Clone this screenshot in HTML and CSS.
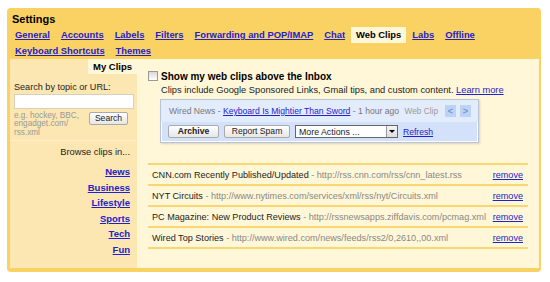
FILE: index.html
```html
<!DOCTYPE html>
<html lang="en">
<head>
  <meta charset="UTF-8" />
  <title>Settings - Web Clips</title>
  <link rel="stylesheet" href="styles.css">
</head>
<body>

<div class="panel">
  <h1>Settings</h1>

  <div class="tabs">
    <a href="#">General</a>
    <a href="#">Accounts</a>
    <a href="#">Labels</a>
    <a href="#">Filters</a>
    <a href="#">Forwarding and POP/IMAP</a>
    <a href="#">Chat</a>
    <span class="current">Web Clips</span>
    <a href="#">Labs</a>
    <a href="#">Offline</a>
    <a href="#">Keyboard Shortcuts</a>
    <a href="#">Themes</a>
  </div>

  <div class="inner">
    <div class="sidebar">
      <div class="side-tab"><span>My Clips</span></div>

      <div class="search">
        <label>Search by topic or URL:</label>
        <input type="text" class="search-box">
        <div class="search-row">
          <div class="hint">e.g. hockey, BBC,<br>engadget.com/<br>rss.xml</div>
          <button class="btn">Search</button>
        </div>
      </div>

      <div class="browse">
        <div class="browse-title">Browse clips in...</div>
        <a href="#">News</a>
        <a href="#">Business</a>
        <a href="#">Lifestyle</a>
        <a href="#">Sports</a>
        <a href="#">Tech</a>
        <a href="#">Fun</a>
      </div>
    </div>

    <div class="main">
      <div class="option">
        <input type="checkbox" class="check">
        <div>
          <div class="option-title">Show my web clips above the Inbox</div>
          <div class="option-desc">Clips include Google Sponsored Links, Gmail tips, and custom content. <a href="#">Learn more</a></div>
        </div>
      </div>

      <div class="preview">
        <div class="preview-top">
          <span class="muted">Wired News - </span><a href="#">Keyboard Is Mightier Than Sword</a><span class="muted"> - 1 hour ago</span>
          <span class="clip-label">Web Clip</span>
          <span class="arrow">&lt;</span>
          <span class="arrow">&gt;</span>
        </div>
        <div class="preview-bottom">
          <button class="btn btn-bold">Archive</button>
          <button class="btn btn-spam">Report Spam</button>
          <div class="select"><span>More Actions ...</span><i class="select-arrow"></i></div>
          <a href="#">Refresh</a>
        </div>
      </div>

      <ul class="clips">
        <li><span>CNN.com Recently Published/Updated <em>- http://rss.cnn.com/rss/cnn_latest.rss</em></span><a href="#">remove</a></li>
        <li><span>NYT Circuits <em>- http://www.nytimes.com/services/xml/rss/nyt/Circuits.xml</em></span><a href="#">remove</a></li>
        <li><span>PC Magazine: New Product Reviews <em>- http://rssnewsapps.ziffdavis.com/pcmag.xml</em></span><a href="#">remove</a></li>
        <li><span>Wired Top Stories <em>- http://www.wired.com/news/feeds/rss2/0,2610,,00.xml</em></span><a href="#">remove</a></li>
      </ul>
    </div>
  </div>
</div>

</body>
</html>
```

FILE: styles.css
```css
body {
  margin: 0;
  font-family: "Liberation Sans", Arial, sans-serif;
  font-size: 9.3px;
  color: #222;
  background: #fff;
}

a {
  color: #2222cc;
}

.panel {
  width: 534px;
  height: 264px;
  margin: 8px 0 0 7px;
  padding: 0 2px 4px 3px;
  box-sizing: border-box;
  background: #fad163;
  border-radius: 4px;
  display: flex;
  flex-direction: column;
}

h1 {
  font-size: 11px;
  font-weight: bold;
  color: #000;
  margin: 0;
  padding: 5px 0 0 2px;
  height: 14px;
}

.tabs {
  display: flex;
  flex-wrap: wrap;
  padding-right: 40px;
}

.tabs a,
.tabs .current {
  font-size: 9.4px;
  font-weight: bold;
  padding: 3px 5px 3px 5px;
  margin-right: 1px;
  line-height: 10px;
}

.tabs .current {
  background: #fff7d7;
  color: #000;
}

.inner {
  flex: 1;
  display: flex;
}

.sidebar {
  width: 127px;
  background: #fce7b2;
}

.side-tab {
  display: flex;
  justify-content: flex-end;
}

.side-tab span {
  width: 49px;
  height: 15px;
  box-sizing: border-box;
  padding: 2px 0 0 5px;
  background: #fff7d7;
  font-weight: bold;
  font-size: 9.5px;
  color: #000;
}

.search {
  padding: 7px 3px 0 4px;
  height: 67px;
  box-sizing: border-box;
  border-bottom: 1px solid #fdf0cc;
}

.search label {
  display: block;
  line-height: 12px;
  font-size: 9.1px;
}

.search-box {
  display: block;
  width: 120px;
  height: 15px;
  margin: 1px 0 0;
  box-sizing: border-box;
  border: 1px solid #d8d0b8;
  background: #fff;
}

.search-row {
  display: flex;
  justify-content: space-between;
  align-items: flex-start;
  padding: 0 6px 0 0;
}

.hint {
  font-size: 8.2px;
  line-height: 8.3px;
  color: #999;
  padding-top: 3px;
}

.btn {
  font-family: "Liberation Sans", Arial, sans-serif;
  font-size: 8.6px;
  color: #222;
  height: 13px;
  padding: 0 4px;
  border: 1px solid #aaa;
  border-radius: 2px;
  background: linear-gradient(#fff, #e6e6e6);
  line-height: 11px;
}

.search-row .btn {
  width: 39px;
  margin-top: 3px;
}

.browse {
  text-align: right;
  padding: 5px 7px 0 0;
  display: flex;
  flex-direction: column;
  align-items: flex-end;
}

.browse-title {
  line-height: 13px;
  margin-bottom: 5px;
}

.browse a {
  font-weight: bold;
  font-size: 9.5px;
  line-height: 15.6px;
}

.main {
  flex: 1;
  background: #fff7d7;
  padding: 11px 11px 0 11px;
}

.option {
  display: flex;
  gap: 3px;
}

.check {
  appearance: none;
  width: 10px;
  height: 10px;
  margin: 1px 0 0;
  border: 1px solid #999;
  background: linear-gradient(#d8d8d8, #fff);
}

.option-title {
  font-weight: bold;
  font-size: 10px;
  color: #000;
  line-height: 13px;
}

.option-desc {
  line-height: 13px;
  margin-top: 1px;
}

.preview {
  margin: 2px 0 0 12px;
  width: 319px;
  height: 44px;
  box-sizing: border-box;
  border: 1px solid #b8c4d8;
  box-shadow: inset 0 0 0 1px #fff, 1px 1px 2px rgba(0, 0, 0, 0.15);
  background: #d3e2fa;
  font-size: 8.6px;
}

.preview-top {
  display: flex;
  align-items: center;
  height: 22px;
  padding: 0 7px 0 8px;
  background: #e3ecfc;
  white-space: pre;
}

.muted {
  color: #777;
}

.clip-label {
  margin-left: auto;
  color: #999;
  font-size: 8.3px;
  margin-right: 3px;
}

.arrow {
  width: 11px;
  height: 12px;
  margin-left: 4px;
  background: #bcd3f6;
  color: #6f96d8;
  font-size: 9px;
  font-weight: bold;
  text-align: center;
  line-height: 12px;
}

.preview-bottom {
  display: flex;
  align-items: center;
  gap: 5px;
  padding: 3px 0 0 7px;
}

.btn-bold {
  font-weight: bold;
  width: 51px;
}

.btn-spam {
  width: 66px;
}

.select {
  width: 103px;
  height: 13px;
  box-sizing: border-box;
  border: 1px solid #666;
  background: #fff;
  display: flex;
  align-items: center;
  justify-content: space-between;
  padding-left: 3px;
  font-size: 8.8px;
}

.select-arrow {
  width: 10px;
  height: 11px;
  border-left: 1px solid #999;
  background: linear-gradient(#f4f4f4, #ddd);
  position: relative;
}

.select-arrow::after {
  content: "";
  position: absolute;
  left: 2px;
  top: 4px;
  border-left: 3px solid transparent;
  border-right: 3px solid transparent;
  border-top: 3px solid #000;
}

.clips {
  list-style: none;
  margin: 20px 0 0;
  padding: 0;
  width: 380px;
  border-bottom: 2px solid #f8d672;
  font-size: 9.1px;
}

.clips li {
  display: flex;
  justify-content: space-between;
  align-items: center;
  gap: 3px;
  height: 21px;
  box-sizing: border-box;
  border-top: 2px solid #f8d672;
  padding: 0 5px 0 4px;
  white-space: nowrap;
}

.clips em {
  font-style: normal;
  color: #888;
}
```
